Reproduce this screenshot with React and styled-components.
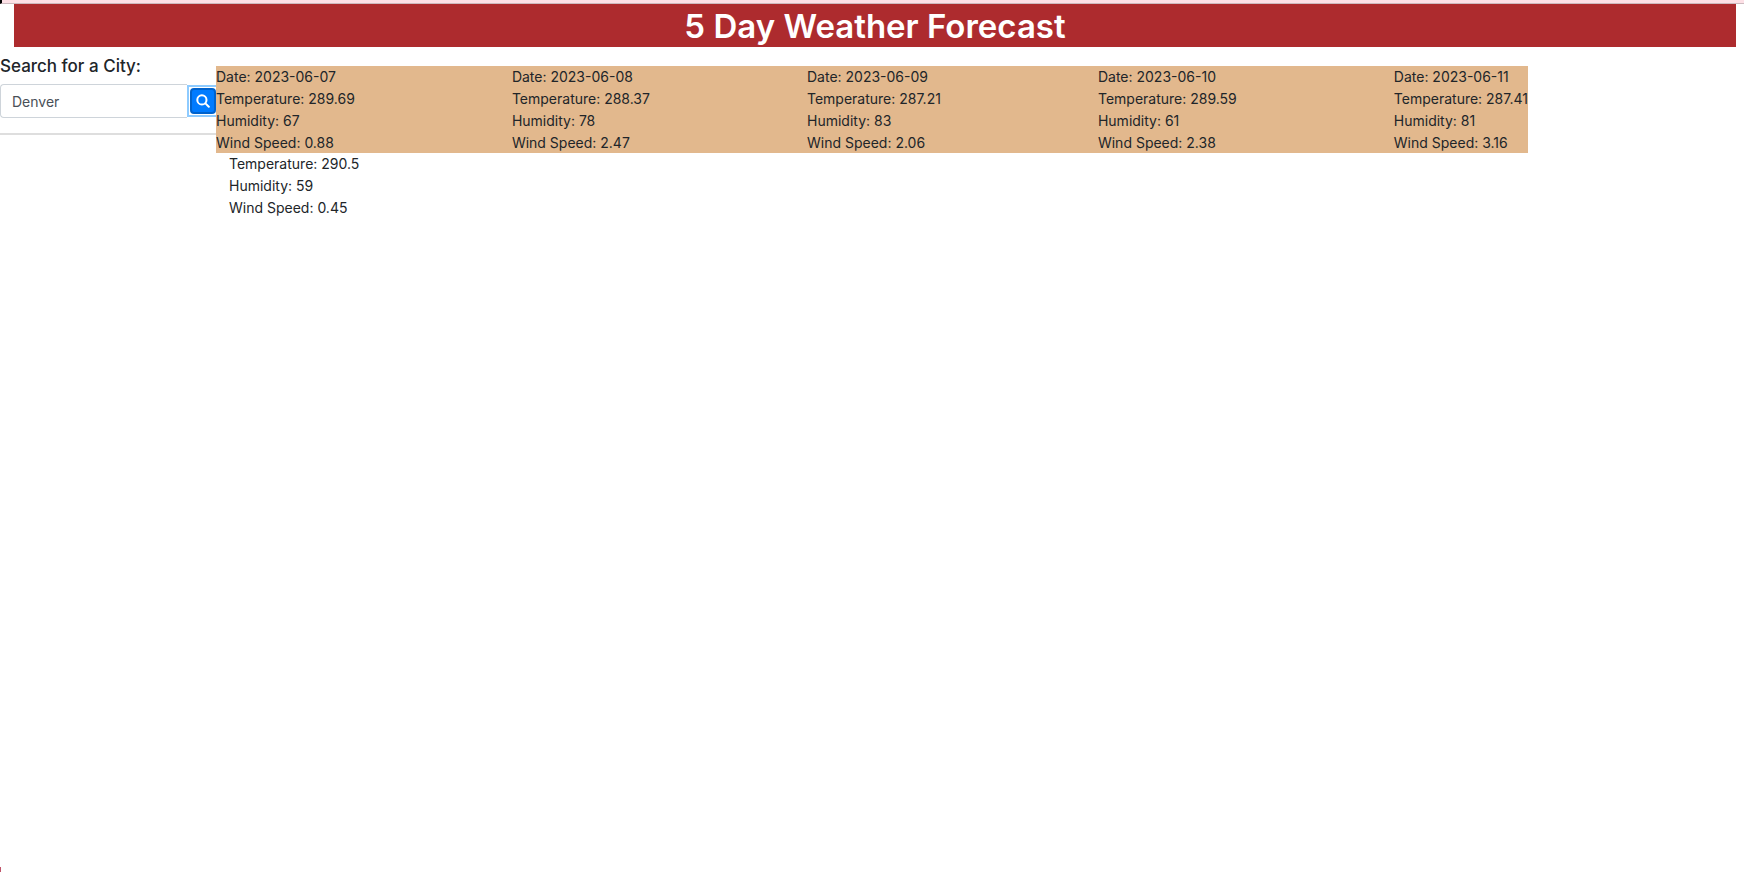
import React from "react";
import styled, { createGlobalStyle } from "styled-components";

const GlobalStyle = createGlobalStyle`
  *, *::before, *::after { box-sizing: border-box; }
  html, body, #root { min-height: 100vh; }
  body {
    margin: 0;
    background: #fff;
    color: #212529;
    font-family: Inter, "Liberation Sans", sans-serif;
    font-size: 14px;
    line-height: 21px;
  }
`;

const Page = styled.div`
  position: relative;
  min-height: 100vh;
  overflow: hidden;
`;

const TopStrip = styled.div`
  height: 4px;
  background: #fde0e6;
  border-left: 2px solid #000;
  border-bottom: 1px solid #cdbabf;
`;

const Corner = styled.div`
  position: absolute;
  left: 0;
  bottom: 0;
  width: 1px;
  height: 5px;
  background: #c0556b;
`;

const Banner = styled.header`
  margin: 0 8px 0 14px;
  background: #ad2b2e;
  color: #fff;
  text-align: center;
`;

const Title = styled.h1`
  margin: 0;
  padding-top: 2px;
  font-size: 33px;
  font-weight: 600;
  line-height: 41px;
`;

const Content = styled.main`
  display: flex;
  align-items: flex-start;
  padding-right: 216px;
`;

const Sidebar = styled.aside`
  flex: 0 0 216px;
  min-width: 0;
  padding-top: 8px;
  border-bottom: 2px solid #dedede;
`;

const SearchForm = styled.form`
  display: flex;
  flex-direction: column;
  gap: 7px;
  padding-bottom: 15px;
`;

const SearchLabel = styled.label`
  font-size: 17px;
  font-weight: 500;
  line-height: 22px;
`;

const SearchRow = styled.div`
  display: flex;
  align-items: center;
  margin-right: -3px;
`;

const CityInput = styled.input`
  flex: 1;
  width: 0;
  min-width: 0;
  height: 34px;
  padding: 1px 11px 0;
  border: 1px solid #ced4da;
  border-right: 0;
  border-radius: 4px 0 0 4px;
  background: #fff;
  color: #495057;
  font: inherit;
  outline: none;
`;

const FocusRing = styled.div`
  padding: 1px;
  border: 2px solid #8ecbff;
  background: #fff;
`;

const SearchButton = styled.button`
  display: flex;
  align-items: center;
  justify-content: center;
  width: 26px;
  height: 26px;
  padding: 0;
  border: 2px solid #0062cc;
  border-radius: 4px;
  background: #007bff;
  color: #fff;
  outline: none;
`;

const Forecast = styled.section`
  flex: 1;
  min-width: 0;
  position: relative;
  padding-top: 19px;
`;

const Days = styled.div`
  display: flex;
  justify-content: space-between;
  background: #e2b88d;
`;

const Readings = styled.ul`
  display: grid;
  gap: 1px;
  margin: 0;
  padding: 0;
  list-style: none;
  white-space: nowrap;
`;

const CurrentWeather = styled.div`
  padding-left: 13px;
`;

const days = [
  { date: "2023-06-07", temp: "289.69", humidity: "67", wind: "0.88" },
  { date: "2023-06-08", temp: "288.37", humidity: "78", wind: "2.47" },
  { date: "2023-06-09", temp: "287.21", humidity: "83", wind: "2.06" },
  { date: "2023-06-10", temp: "289.59", humidity: "61", wind: "2.38" },
  { date: "2023-06-11", temp: "287.41", humidity: "81", wind: "3.16" },
];

const current = { temp: "290.5", humidity: "59", wind: "0.45" };

function Weather({ data }) {
  return (
    <Readings>
      {data.date && <li>Date: {data.date}</li>}
      <li>Temperature: {data.temp}</li>
      <li>Humidity: {data.humidity}</li>
      <li>Wind Speed: {data.wind}</li>
    </Readings>
  );
}

function SearchIcon() {
  return (
    <svg width="14" height="14" viewBox="0 0 14 14" fill="none" stroke="currentColor" strokeWidth="2" strokeLinecap="round" aria-hidden="true">
      <circle cx="5.900" cy="5.900" r="4.600" />
      <path d="M9.400 9.400L12.800 12.800" />
    </svg>
  );
}

export default function App() {
  return (
    <Page>
      <GlobalStyle />
      <TopStrip />
      <Banner>
        <Title>5 Day Weather Forecast</Title>
      </Banner>
      <Content>
        <Sidebar>
          <SearchForm onSubmit={(event) => event.preventDefault()}>
            <SearchLabel htmlFor="city">Search for a City:</SearchLabel>
            <SearchRow>
              <CityInput id="city" type="text" defaultValue="Denver" />
              <FocusRing>
                <SearchButton type="submit" aria-label="Search">
                  <SearchIcon />
                </SearchButton>
              </FocusRing>
            </SearchRow>
          </SearchForm>
        </Sidebar>
        <Forecast>
          <Days>
            {days.map((day) => (
              <Weather key={day.date} data={day} />
            ))}
          </Days>
          <CurrentWeather>
            <Weather data={current} />
          </CurrentWeather>
        </Forecast>
      </Content>
      <Corner />
    </Page>
  );
}
